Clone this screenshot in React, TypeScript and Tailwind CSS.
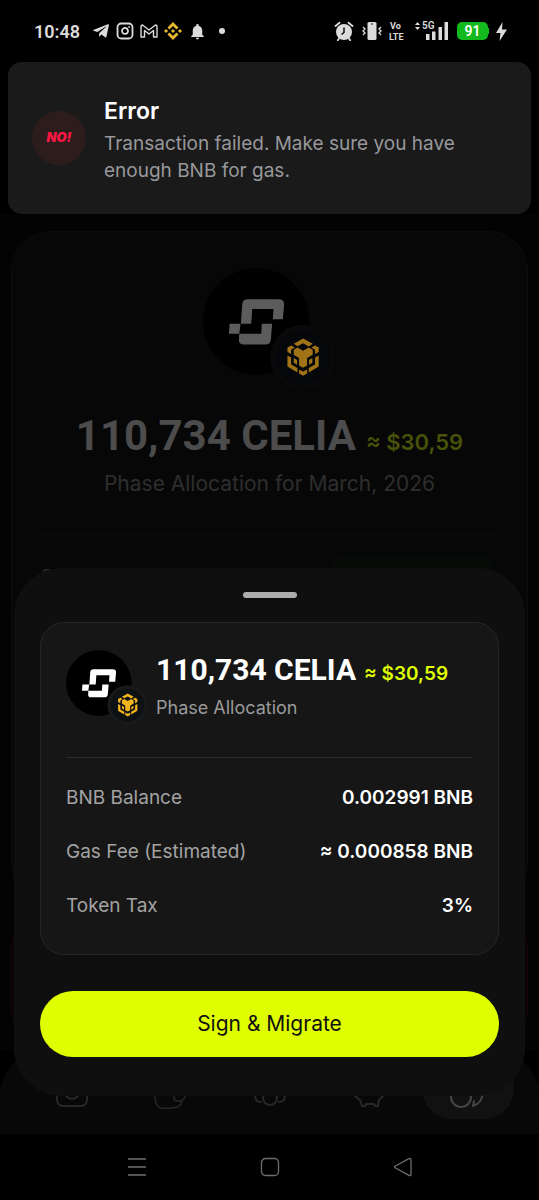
import type { ReactNode } from "react";
import clsx from "clsx";
import { Instagram } from "lucide-react";
import { FaTelegramPlane } from "react-icons/fa";
import { MdNotifications } from "react-icons/md";
import { SiBinance } from "react-icons/si";

const details = [
  { label: "BNB Balance", value: "0.002991 BNB" },
  { label: "Gas Fee (Estimated)", value: "≈ 0.000858 BNB" },
  { label: "Token Tax", value: "3%" },
];

function CoinLogo({ className, dimmed = false }: { className: string; dimmed?: boolean }) {
  const mark = dimmed ? "#5c5c5c" : "#ffffff";
  const chain = dimmed ? "#a07416" : "#f0b41c";

  return (
    <svg viewBox="72 52 400 368" className={className} aria-hidden="true">
      <circle cx="232" cy="212" r="160" fill="#000000" />
      <path
        fill={mark}
        d="M206 145H300Q317 145 316 161L312 205H282L284 174H220L217 219H186L190 161Q191 145 206 145ZM152 219H185L181 249H150ZM181 249H247L249 219H280L276 266Q275 281 260 281H193Q179 281 180 266Z"
      />
      <circle cx="372" cy="320" r="98" fill={dimmed ? "#090909" : "#191919"} />
      <circle cx="372" cy="320" r="82" fill={dimmed ? "#05070a" : "#0e1114"} />
      <g fill={chain}>
        <path d="M345 279 373 263 402 279 390 287 373 277 356 286Z" />
        <path d="M345 297 356 290 373 300 390 290 402 297V312L385 322V344L373 351 361 344V322L345 312Z" />
        <path d="M326 290 337 284 348 290 337 297V310L326 304Z" />
        <path d="M420 290 409 284 398 290 409 297V310L420 304Z" />
        <path d="M326 314 337 320V341L356 352V365L326 347Z" />
        <path d="M420 314 409 320V341L390 352V365L420 347Z" />
        <path d="M345 322 355 328V342L345 336Z" />
        <path d="M401 322 391 328V342L401 336Z" />
        <path d="M361 356 373 362 385 356V368L373 375 361 368Z" />
      </g>
    </svg>
  );
}

function StatusBar() {
  return (
    <header className="flex h-[62px] items-center justify-between pr-8 pl-[34px] text-[#dcdcdc]">
      <div className="flex items-center gap-[6px]">
        <span className="mr-[6px] font-[Roboto] text-[18px] font-semibold">10:48</span>
        <FaTelegramPlane className="size-[18px]" />
        <Instagram className="size-[18px]" strokeWidth={2.4} />
        <svg viewBox="0 0 18 14" className="h-[14px] w-[18px]" fill="none" stroke="currentColor" strokeWidth="1.4" strokeLinejoin="round">
          <path d="M1 13V2.5Q1 1 2.5 1L9 6 15.5 1Q17 1 17 2.5V13H13.5V6.5L9 10 4.5 6.5V13Z" />
        </svg>
        <SiBinance className="size-[18px] text-[#e8b92e]" />
        <MdNotifications className="size-[19px]" />
        <span className="ml-[6px] size-[6px] rounded-full bg-[#dcdcdc]" />
      </div>

      <div className="flex items-center">
        <svg viewBox="0 0 20 20" className="size-5">
          <circle cx="10" cy="11" r="8" fill="currentColor" />
          <path d="M1.5 5 5.5 1.8M14.5 1.8 18.5 5M5 17.5 3.8 19.2M15 17.5 16.2 19.2" stroke="currentColor" strokeWidth="1.8" strokeLinecap="round" />
          <path d="M10 6.5V11.5L7.5 13.5" fill="none" stroke="#000000" strokeWidth="1.4" />
        </svg>
        <svg viewBox="0 0 20 20" className="ml-2 size-5" fill="none" stroke="currentColor" strokeWidth="1.3">
          <rect x="5.5" y="1" width="9" height="18" rx="1.5" fill="currentColor" stroke="none" />
          <path d="M1 6 3 8 1 10 3 12 1 14M19 6 17 8 19 10 17 12 19 14" />
          <circle cx="10" cy="3" r="0.8" fill="#000000" stroke="none" />
        </svg>
        <svg viewBox="0 0 18 20" className="ml-[7px] h-5 w-[18px]" fill="currentColor" fontFamily="Roboto, sans-serif" fontWeight="700">
          <text x="1" y="8" fontSize="9">
            Vo
          </text>
          <text x="0" y="19" fontSize="9">
            LTE
          </text>
        </svg>
        <svg viewBox="0 0 34 20" className="ml-2 h-5 w-[34px]" fill="currentColor">
          <path d="M0 4 2.5 1 5 4ZM0 6H5L2.5 9Z" />
          <text x="7" y="8" fontSize="10" fontWeight="600" fontFamily="Roboto, sans-serif">
            5G
          </text>
          <path d="M11 13H14.5V19H11ZM17 10.5H20.5V19H17ZM23.5 6H27V19H23.5ZM29.5 1H33V19H29.5Z" />
        </svg>
        <div className="ml-2 flex items-center">
          <span className="flex h-[18px] w-[31px] items-center justify-center rounded-[5px] bg-[#12ba1e] font-[Roboto] text-[14px] font-semibold text-white">
            91
          </span>
          <span className="h-[6px] w-px bg-[#12ba1e]" />
        </div>
        <svg viewBox="0 0 11 19" className="ml-[7px] h-[19px] w-[11px]" fill="currentColor">
          <path d="M6.5 0 0 11H4.5L3.5 19 11 7.5H6Z" />
        </svg>
      </div>
    </header>
  );
}

function Toast() {
  return (
    <div role="alert" className="mx-2 flex items-center gap-[18px] rounded-[14px] bg-[#1a1a1a] px-6 py-[30px]">
      <div className="flex size-[54px] shrink-0 items-center justify-center rounded-full bg-[#2d1c1c]">
        <span className="font-[Inter] text-[13px] font-black text-[#ff1744] italic">NO!</span>
      </div>
      <div className="pt-1">
        <h2 className="text-[23px] leading-[30px] font-semibold text-white">Error</h2>
        <p className="mt-1 text-[19px] leading-[27px] text-[#98989c]">
          Transaction failed. Make sure you have enough BNB for gas.
        </p>
      </div>
    </div>
  );
}

function AllocationCard() {
  return (
    <section className="flex-1 rounded-[40px] border border-[#0d0d0d] bg-[#070707] px-[29px] pt-9">
      <CoinLogo className="mx-auto h-[123px] w-[133px]" dimmed />
      <h1 className="mt-5 flex items-baseline justify-center gap-[10px] leading-[50px] whitespace-nowrap">
        <span className="font-[Roboto] text-[42px] font-bold text-[#4c4c4c]">110,734 CELIA</span>
        <span className="text-[22px] font-semibold text-[#485208]">≈ $30,59</span>
      </h1>
      <p className="mt-[3px] text-center text-[21px] leading-7 text-[#2e2e2e]">
        Phase Allocation for March, 2026
      </p>
      <hr className="mt-9 border-[#0c0c0c]" />
      <div className="mt-[19px] flex h-[46px] items-center justify-between text-[19px] text-[#2e2e2e]">
        <span>Status</span>
        <span className="flex h-full w-[170px] items-center justify-center rounded-full bg-[#070b08] text-[#1d2b20]">
          Claimable
        </span>
      </div>
    </section>
  );
}

function TabItem({ label, active = false, children }: { label: string; active?: boolean; children: ReactNode }) {
  return (
    <a
      href="#"
      aria-label={label}
      className={clsx(
        "flex h-[62px] w-[92px] items-center justify-center rounded-[30px]",
        active ? "bg-[#111111] text-[#454545]" : "text-[#272727]",
      )}
    >
      <svg
        viewBox="0 0 36 36"
        className="size-9 overflow-visible"
        fill="none"
        stroke="currentColor"
        strokeWidth="2"
        strokeLinecap="round"
        strokeLinejoin="round"
      >
        {children}
      </svg>
    </a>
  );
}

function TabBar() {
  return (
    <nav className="flex h-[84px] items-start justify-between rounded-t-[46px] bg-[#080808] px-[25px] pt-[7px]">
      <TabItem label="Home">
        <rect x="4" y="6" width="30" height="30" rx="6" />
        <path d="M13 26Q19 32 25 26" />
      </TabItem>
      <TabItem label="Wallet">
        <path
          d="M2 18 3 28Q4 37 9 38 17 39 26 37 29 35 30 31M22 22V28Q22 31 25 31H29Q33 29 34 24"
          strokeWidth="1.5"
        />
      </TabItem>
      <TabItem label="Community">
        <circle cx="18" cy="28" r="7" />
        <path d="M3 25Q3 32 9 32M33 25Q33 32 27 32" />
      </TabItem>
      <TabItem label="Savings">
        <path d="M4 26 9 30 11 36H14L15 34H23L24 36H27L28 30 33 25" />
      </TabItem>
      <TabItem label="Migrate" active>
        <circle cx="11" cy="27" r="10" />
        <path d="M33 23Q32 33 23 36L24 31" />
      </TabItem>
    </nav>
  );
}

function MigrateSheet() {
  return (
    <section
      role="dialog"
      aria-label="Migrate allocation"
      className="absolute inset-x-[14px] bottom-[104px] rounded-[48px] bg-[#0f0f0f] px-[26px] pt-6 pb-[39px]"
    >
      <div className="mx-auto h-[6px] w-[54px] rounded-full bg-[#adadad]" />
      <div className="mt-6 rounded-[24px] border border-[#262626] bg-[#161616] px-[25px] pt-[27px] pb-[21px]">
        <div className="flex items-start gap-2">
          <CoinLogo className="h-[76px] w-[82px] shrink-0" />
          <div className="whitespace-nowrap">
            <h2 className="flex items-baseline gap-2 leading-10">
              <span className="font-[Roboto] text-[30px] font-bold text-white">110,734 CELIA</span>
              <span className="text-[19px] font-semibold text-[#dfff00]">≈ $30,59</span>
            </h2>
            <p className="mt-[2px] text-[18px] leading-6 text-[#9a9a9a]">Phase Allocation</p>
          </div>
        </div>
        <hr className="mt-[31px] border-[#2b2b2b]" />
        <dl className="mt-[13px]">
          {details.map((row) => (
            <div key={row.label} className="flex h-[54px] items-center justify-between">
              <dt className="text-[19px] text-[#a3a3a3]">{row.label}</dt>
              <dd className="text-[19px] font-semibold text-white">{row.value}</dd>
            </div>
          ))}
        </dl>
      </div>
      <button type="button" className="mt-9 h-[66px] w-full rounded-full bg-[#dfff00] text-[21px] text-[#111111]">
        Sign &amp; Migrate
      </button>
    </section>
  );
}

function SystemNav() {
  return (
    <nav className="grid h-[66px] grid-cols-3 items-center justify-items-center bg-black px-[70px] text-[#6e6e6e]">
      <button type="button" aria-label="Recent apps">
        <svg viewBox="0 0 20 20" className="size-5" stroke="currentColor" strokeWidth="1.5">
          <path d="M1 2H19M1 10H19M1 18H19" />
        </svg>
      </button>
      <button type="button" aria-label="Home screen">
        <svg viewBox="0 0 20 20" className="size-5" fill="none" stroke="currentColor" strokeWidth="1.3">
          <rect x="1.5" y="1.5" width="17" height="17" rx="4" />
        </svg>
      </button>
      <button type="button" aria-label="Back">
        <svg viewBox="0 0 20 20" className="size-5" fill="none" stroke="currentColor" strokeWidth="1.3" strokeLinejoin="round">
          <path d="M2 9.2 16 1.6Q18 1 18 3V17Q18 19 16 18.4L2 10.8Q1 10 2 9.2Z" />
        </svg>
      </button>
    </nav>
  );
}

export default function App() {
  return (
    <div className="relative flex min-h-screen flex-col bg-black font-[Inter,sans-serif]">
      <StatusBar />
      <Toast />
      <main className="flex flex-1 flex-col bg-[#030303] px-[11px] pt-[17px]">
        <AllocationCard />
        <div className="mt-5 mb-4 h-[110px] rounded-[24px] border border-[#1c0508] bg-[#0a0304]" />
      </main>
      <TabBar />
      <SystemNav />
      <MigrateSheet />
    </div>
  );
}
